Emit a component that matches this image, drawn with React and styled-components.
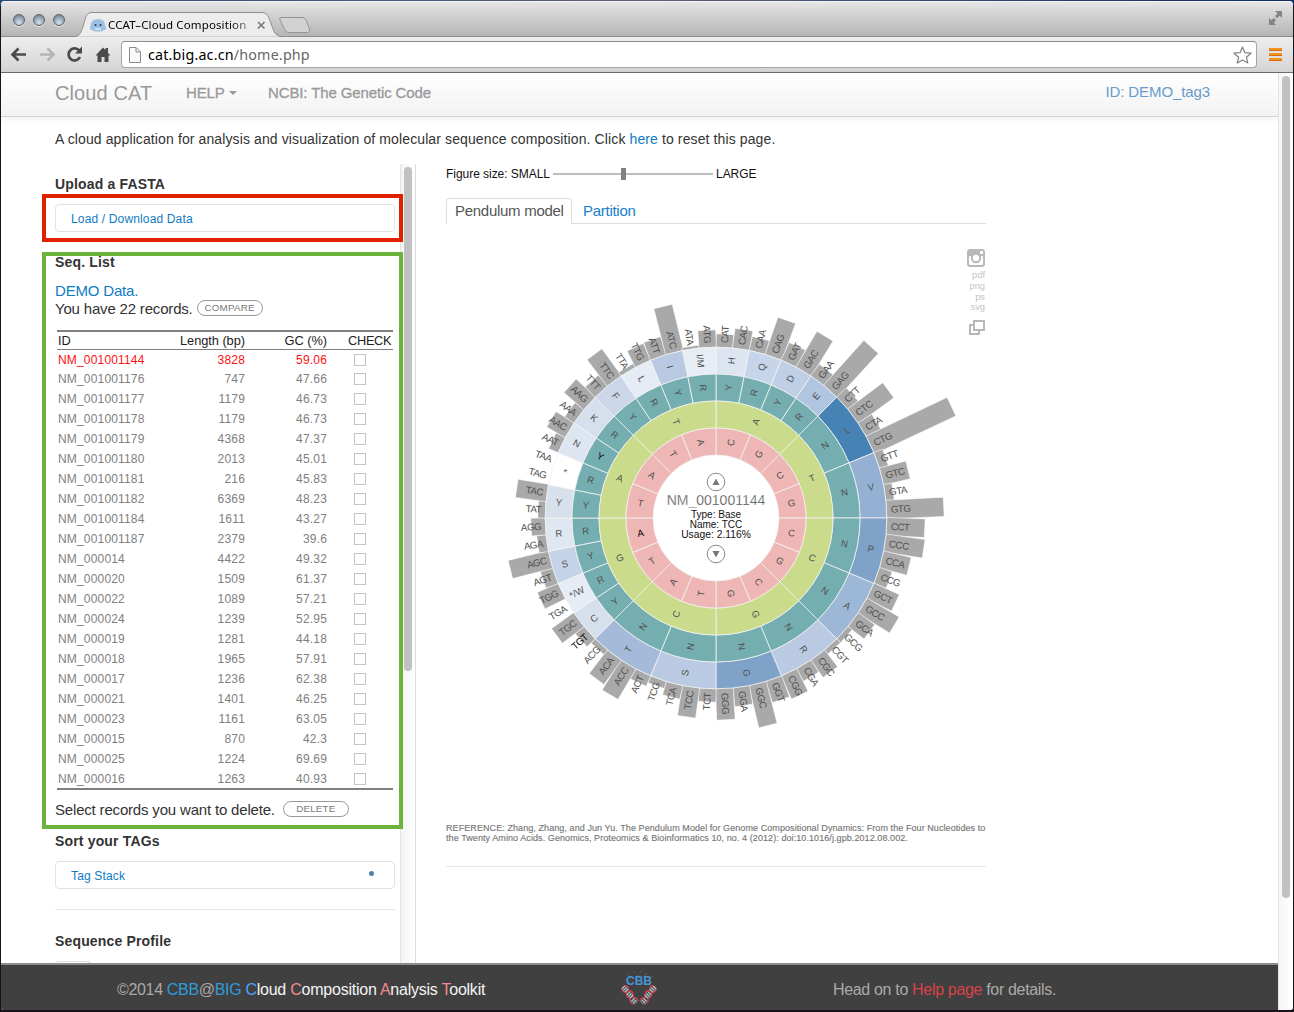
import React from "react";
import styled, { createGlobalStyle } from "styled-components";

const Global = createGlobalStyle`
  * { box-sizing: border-box; }
  html, body { margin: 0; padding: 0; height: 100%; overflow: hidden; }
  body { font-family: "Liberation Sans", Arial, sans-serif; color: #333; }
`;

const Desktop = styled.div`
  width: 1294px;
  height: 1012px;
  padding: 1px 1px 2px;
  background: linear-gradient(90deg, #2a4d78, #5d5f78 50%, #0d2d62) top / 100% 6px no-repeat, #171318;
`;
const Window = styled.div`
  display: flex;
  flex-direction: column;
  height: 1009px;
  overflow: hidden;
  border-radius: 4px 4px 3px 3px;
  background: #fff;
`;
const TitleBar = styled.div`
  display: flex;
  flex: none;
  height: 35px;
  background: linear-gradient(#e7e7e7, #cfcfcf 45%, #b5b5b5);
  box-shadow: inset 0 1px #f4f4f4;
  svg { display: block; }
`;
const Lights = styled.div`
  display: flex;
  gap: 8px;
  padding: 13px 0 0 12px;
  width: 73px;
`;
const Light = styled.span`
  width: 12px;
  height: 12px;
  border-radius: 50%;
  border: 1px solid #59636f;
  background: radial-gradient(circle at 50% 75%, #d3e1ec, #8fa0b1 60%, #66727f);
  box-shadow: 0 1px #eee;
`;
const TabShape = styled.div`
  position: relative;
  width: 208px;
  height: 36px;
  z-index: 1;
`;
const TabLabel = styled.div`
  position: absolute;
  left: 34px;
  top: 15px;
  width: 146px;
  white-space: nowrap;
  font: 11.5px/18px "Noto Sans", "Open Sans", sans-serif;
  letter-spacing: 0.13px;
  color: #000;
  mask-image: linear-gradient(90deg, #000 122px, rgba(0, 0, 0, 0.35) 142px);
`;
const NewTab = styled.div`
  padding: 15px 0 0 0;
  margin-left: -4px;
  flex: 1;
`;
const Expand = styled.div`
  padding: 9px 10px 0 0;
`;
const Toolbar = styled.div`
  display: flex;
  flex: none;
  align-items: center;
  height: 37px;
  padding: 0 11px 0 9px;
  border-top: 1px solid #8b8b8b;
  border-bottom: 1px solid #6d6d6d;
  background: linear-gradient(#ededed, #d5d5d5);
  svg { display: block; flex: none; }
`;
const Address = styled.div`
  display: flex;
  align-items: center;
  width: 1136px;
  height: 27px;
  margin: 0 12px 0 9px;
  padding: 0 4px 0 7px;
  border: 1px solid #a7a7a7;
  border-top-color: #8d8d8d;
  border-radius: 4px;
  background: #fff;
`;
const Url = styled.div`
  flex: 1;
  padding-left: 7px;
  font: 14.3px/24px "Noto Sans", "Open Sans", sans-serif;
  letter-spacing: 0.18px;
  color: #666;
  b { font-weight: 400; color: #000; }
`;
const Viewport = styled.div`
  display: flex;
  flex: 1;
  min-height: 0;
`;
const Page = styled.div`
  display: flex;
  flex-direction: column;
  width: 1277px;
`;
const PageScroll = styled.div`
  width: 15px;
  padding: 3px 3px;
  border-left: 1px solid #e4e4e4;
  background: linear-gradient(90deg, #f6f6f6, #fff);
`;
const Thumb = styled.div`
  width: 8px;
  height: ${(p) => p.$h}px;
  border-radius: 4px;
  background: #c1c1c1;
`;
const Nav = styled.nav`
  display: flex;
  flex: none;
  height: 44px;
  padding: 0 68px 4px 54px;
  align-items: center;
  border-bottom: 1px solid #d4d4d4;
  background: linear-gradient(#fff, #f2f2f2);
  box-shadow: 0 1px 8px rgba(0, 0, 0, 0.08);
  color: #999;
  font-size: 15px;
  white-space: nowrap;
`;
const Brand = styled.div`
  width: 131px;
  padding-top: 2px;
  font-size: 20px;
  letter-spacing: 0.1px;
`;
const NavItem = styled.div`
  display: flex;
  align-items: center;
  gap: 4px;
  width: ${(p) => p.$w || "auto"};
  -webkit-text-stroke: 0.3px #999;
  letter-spacing: ${(p) => p.$ls || "0"};
`;
const Caret = styled.i`
  border: 4.5px solid transparent;
  border-top-color: #999;
  border-bottom: 0;
`;
const UserId = styled.div`
  margin: -3px 0 0 auto;
  color: #689cc9;
  font-size: 15px;
  letter-spacing: -0.1px;
`;
const Intro = styled.p`
  flex: none;
  height: 47px;
  margin: 0;
  padding: 12px 54px;
  font-size: 14px;
  line-height: 20px;
  letter-spacing: 0.112px;
  white-space: nowrap;
`;
const Link = styled.a`
  color: ${(p) => p.$c || "#0e7cc4"};
`;
const Columns = styled.div`
  display: flex;
  flex: none;
  height: 799px;
`;
const Side = styled.aside`
  display: flex;
  flex: none;
  width: 415px;
  padding-left: 54px;
`;
const SideBody = styled.div`
  width: 345px;
  padding: 10px 5px 0 0;
`;
const SideScroll = styled.div`
  width: 16px;
  padding: 3px 3px 0 3px;
  border-left: 1px solid #e3e3e3;
  border-right: 1px solid #dcdcdc;
  background: linear-gradient(90deg, #f3f3f3, #fff);
`;
const Heading = styled.h4`
  margin: ${(p) => p.$mt || 0}px 0 10px;
  font-size: 14px;
  line-height: 20px;
  letter-spacing: ${(p) => p.$ls || "0.16px"};
`;
const Marked = styled.section`
  position: relative;
`;
const Marker = styled.div`
  position: absolute;
  left: -13px;
  top: ${(p) => p.$top}px;
  width: 361px;
  height: ${(p) => p.$h}px;
  border: 4px solid ${(p) => p.$c};
  z-index: 2;
`;
const Accordion = styled.div`
  display: flex;
  justify-content: space-between;
  align-items: center;
  height: 28px;
  padding: 2px 20px 0 15px;
  border: 1px solid #e2e2e2;
  border-radius: 4px;
  font-size: 12px;
  letter-spacing: 0.15px;
`;
const Dot = styled.i`
  width: 5px;
  height: 5px;
  margin-top: -5px;
  border-radius: 50%;
  background: #4682b4;
`;
const Line = styled.div`
  display: flex;
  align-items: center;
  height: ${(p) => p.$h || 18}px;
  margin-top: ${(p) => p.$mt || 0}px;
  padding-bottom: 2px;
  gap: ${(p) => p.$gap || 4}px;
  font-size: 15px;
  letter-spacing: -0.18px;
  white-space: nowrap;
`;
const Pill = styled.button`
  height: 16px;
  width: 66px;
  padding: 0;
  border: 1px solid #999;
  border-radius: 8px;
  background: #fff;
  color: #777;
  font: 9.8px/14px "Liberation Sans", sans-serif;
  letter-spacing: 0.2px;
`;
const Table = styled.div`
  margin: 12px 0 0 2px;
  width: 336px;
  border-top: 2px solid #808080;
  border-bottom: 2px solid #808080;
`;
const Row = styled.div`
  display: grid;
  grid-template-columns: 107px 80px 82px 67px;
  align-items: center;
  height: ${(p) => p.$h || 20}px;
  padding-left: 1px;
  font-size: 12px;
  letter-spacing: 0.17px;
  color: ${(p) => (p.$active ? "#ff1010" : "#808080")};
  > :nth-child(2), > :nth-child(3) { text-align: right; }
`;
const HeadRow = styled(Row)`
  height: 18px;
  border-bottom: 1px solid #808080;
  font-size: 12.8px;
  letter-spacing: -0.04px;
  color: #222;
  white-space: nowrap;
  > :last-child { padding-left: 21px; letter-spacing: -0.3px; }
`;
const Check = styled.span`
  width: 12px;
  height: 12px;
  margin-left: 27px;
  border: 1px solid #c4c4c4;
  background: #fff;
`;
const Hr = styled.div`
  height: 1px;
  margin-top: ${(p) => p.$mt}px;
  background: #e6e6e6;
`;
const Stub = styled.div`
  width: 36px;
  height: 3px;
  border: 1px solid #ddd;
  border-bottom: 0;
  border-radius: 4px 4px 0 0;
`;
const Main = styled.main`
  width: 570px;
  padding-left: 30px;
`;
const SizeRow = styled.div`
  display: flex;
  align-items: center;
  height: 20px;
  gap: 3px;
  font-size: 12px;
  letter-spacing: -0.04px;
  color: #111;
  white-space: nowrap;
`;
const Track = styled.div`
  display: flex;
  align-items: center;
  justify-content: center;
  width: 160px;
  height: 2px;
  padding-right: 20px;
  background: #bdbdbd;
`;
const Knob = styled.i`
  width: 5px;
  height: 12px;
  background: #808080;
`;
const Tabs = styled.div`
  display: flex;
  height: 26px;
  margin-top: 14px;
  border-bottom: 1px solid #ddd;
  font-size: 15px;
  line-height: 24px;
  letter-spacing: -0.28px;
  white-space: nowrap;
`;
const Tab = styled.div`
  height: 26px;
  width: ${(p) => (p.$on ? "126px" : "80px")};
  padding-left: ${(p) => (p.$on ? 8 : 10)}px;
  border: ${(p) => (p.$on ? "1px solid #ddd" : "1px solid transparent")};
  border-bottom-color: ${(p) => (p.$on ? "#fff" : "#ddd")};
  border-radius: 4px 4px 0 0;
  color: ${(p) => (p.$on ? "#555" : "#1480cc")};
`;
const ChartArea = styled.div`
  position: relative;
  height: 599px;
  svg { display: block; }
`;
const Export = styled.div`
  position: absolute;
  right: 1px;
  top: 25px;
  display: flex;
  flex-direction: column;
  align-items: flex-end;
  font-size: 9.3px;
  line-height: 10.8px;
  color: #c4c4c4;
  svg:first-child { margin-bottom: 3px; }
  svg:last-child { margin-top: 6px; }
`;
const Reference = styled.p`
  margin: 0;
  font-size: 9px;
  line-height: 10px;
  letter-spacing: 0.08px;
  color: #777;
  white-space: nowrap;
  -webkit-text-stroke: 0.15px #777;
`;
const Footer = styled.footer`
  position: relative;
  display: flex;
  flex: none;
  align-items: center;
  height: 47px;
  border-top: 2px solid #8c8c8c;
  padding-left: 116px;
  padding-top: 4px;
  background: #404040;
  color: #aaa;
  font-size: 16px;
  white-space: nowrap;
  svg { display: block; margin-top: -2px; }
`;
const Copy = styled.div`
  width: 503px;
  letter-spacing: -0.33px;
`;
const Product = styled.span`
  color: #f4f4f4;
  letter-spacing: -0.24px;
`;
const Tint = styled.span`
  color: ${(p) => p.$c};
`;
const HelpText = styled.div`
  margin-left: 175px;
  letter-spacing: -0.33px;
`;

const records = [
  ["NM_001001144", "3828", "59.06"], ["NM_001001176", "747", "47.66"], ["NM_001001177", "1179", "46.73"],
  ["NM_001001178", "1179", "46.73"], ["NM_001001179", "4368", "47.37"], ["NM_001001180", "2013", "45.01"],
  ["NM_001001181", "216", "45.83"], ["NM_001001182", "6369", "48.23"], ["NM_001001184", "1611", "43.27"],
  ["NM_001001187", "2379", "39.6"], ["NM_000014", "4422", "49.32"], ["NM_000020", "1509", "61.37"],
  ["NM_000022", "1089", "57.21"], ["NM_000024", "1239", "52.95"], ["NM_000019", "1281", "44.18"],
  ["NM_000018", "1965", "57.91"], ["NM_000017", "1236", "62.38"], ["NM_000021", "1401", "46.25"],
  ["NM_000023", "1161", "63.05"], ["NM_000015", "870", "42.3"], ["NM_000025", "1224", "69.69"],
  ["NM_000016", "1263", "40.93"],
];

const CX = 270;
const CY = 294;
const polar = (r, deg) => {
  const a = (deg * Math.PI) / 180;
  return [CX + r * Math.sin(a), CY - r * Math.cos(a)];
};
const wedge = (r0, r1, a0, a1) => {
  const [x0, y0] = polar(r0, a0);
  const [x1, y1] = polar(r1, a0);
  const [x2, y2] = polar(r1, a1);
  const [x3, y3] = polar(r0, a1);
  return `M${x0} ${y0}L${x1} ${y1}A${r1} ${r1} 0 0 1 ${x2} ${y2}L${x3} ${y3}A${r0} ${r0} 0 0 0 ${x0} ${y0}Z`;
};

const STEP = 5.625;
const S = (list, span) => list.map((label) => ({ label, span }));
const inner = S("CGCGCGCGTATATATA".split(""), 4);
const second = S("ATCGCGAT".split(""), 8);
const third = [...S("YRYR".split(""), 2), ...S("NNNNNNNN".split(""), 4), ...S("YRYRYRYRYRYR".split(""), 2)];
const amino = [
  ["H", 2, "#dde5f0"], ["Q", 2, "#c6d5e9"], ["D", 2, "#bfcfe5"], ["E", 2, "#b0c5df"],
  ["L", 4, "#4682b4"], ["V", 4, "#94b0d3"], ["P", 4, "#7fa2c9"], ["A", 4, "#9db8d7"],
  ["R", 4, "#b9cae2"], ["G", 4, "#7fa2c9"], ["S", 4, "#b9cae2"], ["T", 4, "#a5bad9"],
  ["C", 2, "#d6e0ed"], ["*/W", 2, "#e6ecf5"], ["S", 2, "#c4d3e8"], ["R", 2, "#dfe7f1"],
  ["Y", 2, "#d6e1ec"], ["*", 2, "#ffffff"], ["N", 2, "#dde5f1"], ["K", 2, "#d6e0ed"],
  ["F", 2, "#cbd7e9"], ["L", 2, "#e6ecf5"], ["I", 2, "#b9c9e2"], ["I/M", 2, "#e6edf5"],
].map(([label, span, fill]) => ({ label, span, fill }));
const codons = [
  ["CAT", 184], ["CAC", 190.5], ["CAA", 185], ["CAG", 210], ["GAT", 190], ["GAC", 212], ["GAA", 185], ["GAG", 231],
  ["CTT", 184], ["CTC", 214.5], ["CTA", 187], ["CTG", 260.5], ["GTT", 180], ["GTC", 198], ["GTA", 179], ["GTG", 228],
  ["CCT", 209], ["CCC", 210], ["CCA", 199], ["CCG", 184], ["GCT", 198.5], ["GCC", 208], ["GCA", 191], ["GCG", 176],
  ["CGT", 176], ["CGC", 192], ["CGA", 185], ["CGG", 196], ["GGT", 193], ["GGC", 214], ["GGA", 189.5], ["GGG", 202],
  ["TCT", 184], ["TCC", 201], ["TCA", 184.5], ["TCG", 178], ["ACT", 182], ["ACC", 206], ["ACA", 200.5], ["ACG", 176.5],
  ["TGT", 182], ["TGC", 198], ["TGA", 171], ["TGG", 193.5], ["AGT", 183.5], ["AGC", 212], ["AGA", 180], ["AGG", 185],
  ["TAT", 178], ["TAC", 201.5], ["TAG", 171], ["TAA", 171], ["AAT", 181], ["AAC", 192], ["AAA", 182], ["AAG", 197],
  ["TTT", 185], ["TTC", 204], ["TTA", 175], ["TTG", 189], ["ATT", 189.5], ["ATC", 218], ["ATA", 173.5], ["ATG", 188],
];

const barPath = (r0, r1, a0, a1) => {
  const mid = (a0 + a1) / 2;
  const a = (mid * Math.PI) / 180;
  const h = r0 * Math.sin(((a1 - a0) * Math.PI) / 360) + (r1 - r0) * 0.018;
  const at = (r, side) => {
    const [x, y] = polar(r, mid);
    return `${x + side * Math.cos(a)} ${y + side * Math.sin(a)}`;
  };
  return `M${at(r0, -h)}L${at(r1, -h * 1.03)}L${at(r1, h * 1.03)}L${at(r0, h)}Z`;
};

const ChartText = styled.text`
  font: ${(p) => (p.$tight ? 9.8 : 9.5)}px "Liberation Sans", sans-serif;
  letter-spacing: ${(p) => (p.$tight ? "-0.5px" : "0")};
  fill: ${(p) => (p.$dark ? "#000" : "#505050")};
`;

function Radial({ r, deg, anchor = "middle", tight, dark, children }) {
  const left = deg > 180;
  const [x, y] = polar(r, deg);
  const textAnchor = anchor === "middle" ? "middle" : left ? "end" : "start";
  return (
    <ChartText $tight={tight} $dark={dark} textAnchor={textAnchor} dy="3.3"
      transform={`translate(${x} ${y}) rotate(${left ? deg + 90 : deg - 90})`}>
      {children}
    </ChartText>
  );
}

function Ring({ items, r0, r1, fill, darkIndex }) {
  let pos = 0;
  return (
    <g>
      {items.map((it, i) => {
        const a0 = pos * STEP;
        pos += it.span;
        const a1 = pos * STEP;
        return (
          <g key={i}>
            <path d={wedge(r0, r1, a0, a1)} fill={it.fill || fill} stroke="#f3f3f3" strokeWidth="0.8" />
            <Radial r={(r0 + r1) / 2 + 0.5} deg={(a0 + a1) / 2} dark={i === darkIndex}>{it.label}</Radial>
          </g>
        );
      })}
    </g>
  );
}

const CenterText = styled.text`
  font: ${(p) => p.$size}px "Liberation Sans", sans-serif;
  fill: ${(p) => p.$c || "#111"};
`;

function Pendulum() {
  return (
    <svg width="540" height="594" viewBox="0 0 540 594">
      {codons.map(([c, r], i) => (
        <path key={c} d={barPath(170.5, Math.max(r, 171), i * STEP, (i + 1) * STEP)} fill={r > 171 ? "#a9a9a9" : "#eee"} stroke="#fff" strokeWidth="0.6" />
      ))}
      <Ring items={amino} r0={144} r1={170.8} />
      <Ring items={third} r0={117} r1={144} fill="#75aeb0" darkIndex={18} />
      <Ring items={second} r0={90} r1={117} fill="#cadc8b" />
      <Ring items={inner} r0={63} r1={90} fill="#efb6b6" darkIndex={11} />
      {codons.map(([c], i) => (
        <Radial key={c} r={175} deg={(i + 0.5) * STEP} anchor="edge" tight dark={c === "TGT"}>{c}</Radial>
      ))}
      <g fill="#fff" stroke="#888">
        <circle cx="270" cy="258" r="8.8" />
        <circle cx="270" cy="330" r="8.8" />
      </g>
      <path d="M266.5 261L270 254.5L273.5 261ZM266.5 327L270 333.5L273.5 327Z" fill="#777" />
      <g textAnchor="middle">
        <CenterText x={CX} y="281" $size={14} $c="#333" stroke="#fff" strokeWidth="0.35">NM_001001144</CenterText>
        <CenterText x={CX} y="294" $size={10}>Type: Base</CenterText>
        <CenterText x={CX} y="304" $size={10}>Name: TCC</CenterText>
        <CenterText x={CX} y="314" $size={10.3}>Usage: 2.116%</CenterText>
      </g>
    </svg>
  );
}

const Helix = ({ flip }) => (
  <g transform={flip ? "translate(38 0) scale(-1 1)" : undefined}>
    <path d="M2 21Q3 16 7 17Q9 20 8 22Q12 21 13 25Q12 28 13 29Q17 28 18 32M2 21Q4 24 7 23Q5 28 10 29Q9 34 14 35" fill="none" stroke="#c9424c" strokeWidth="1.5" />
    <g fill="none" stroke="#a8ccd2" strokeWidth="4.5" strokeDasharray="1.3 0.9">
      <path d="M3 18L7 22M8 24L12 28M12.500 30.500L16 34" />
    </g>
  </g>
);

export default function App() {
  return (
    <Desktop>
      <Global />
      <Window>
        <TitleBar>
          <Lights><Light /><Light /><Light /></Lights>
          <TabShape>
            <svg width="208" height="36">
              <path d="M1 35.5C6 35 7 31 9 25.500L11.500 17Q13 11.500 18 11.500H188Q193 11.500 195 17L199 28Q201 34.500 207 35.500" fill="#ececec" stroke="#8f8f8f" />
              <path d="M3 36.500H205" stroke="#ececec" strokeWidth="2" />
              <g fill="#9cc1e2"><ellipse cx="24" cy="23.500" rx="7" ry="5.500" /><circle cx="19" cy="26.500" r="3" /><circle cx="29" cy="26.500" r="3" /><rect x="19" y="25" width="10" height="5.500" rx="2" /></g>
              <circle cx="21.500" cy="24" r="1" fill="#235" /><circle cx="26.500" cy="24" r="1" fill="#235" />
              <path d="M21 28h6" stroke="#fff" />
              <path d="M184 21l6.500 6.500M190.500 21l-6.500 6.500" stroke="#777" strokeWidth="1.600" />
            </svg>
            <TabLabel>CCAT–Cloud Composition</TabLabel>
          </TabShape>
          <NewTab>
            <svg width="34" height="18"><path d="M3 1.500H24Q27 1.500 28 4L31.500 13Q32 16.500 30 16.500H11Q8 16.500 7 14L2 4Q1 1.500 3 1.500Z" fill="#d2d2d2" stroke="#969696" /></svg>
          </NewTab>
          <Expand>
            <svg width="15" height="16" fill="#848484"><path d="M7 1h7v7l-2.300-2.300-2.600 2.500-2.100-2 2.500-2.700zM1 8v7h7L5.700 12.600 8 10.300 5.700 8 3.300 10.300z" /></svg>
          </Expand>
        </TitleBar>
        <Toolbar>
          <svg width="102" height="24" fill="none" stroke="#4b4b4b" strokeWidth="2.700">
            <path d="M16 11.500H3M8.500 5.500L2.500 11.500L8.500 17.500" />
            <path d="M30 11.500H43M37.500 5.500L43.500 11.500L37.500 17.500" stroke="#b5b5b5" />
            <path d="M69.500 8A6 6 0 1 0 70 14" />
            <path d="M72 3.500V10.500H65Z" fill="#4b4b4b" stroke="none" />
            <path d="M85.500 12.500L93 4.500L95.500 7V5H98V10L100.500 12.500H98.500V19H94.500V14H91.500V19H87.500V12.500Z" fill="#4b4b4b" stroke="none" />
          </svg>
          <Address>
            <svg width="12" height="16"><path d="M.5.500H7L11.500 5V15.500H.5ZM7 .5V5H11.500" fill="#fafafa" stroke="#888" /></svg>
            <Url><b>cat.big.ac.cn</b>/home.php</Url>
            <svg width="19" height="18"><path d="M9.500 1L11.900 6.700 18 7.200 13.400 11.200 14.800 17 9.500 13.900 4.200 17 5.600 11.200 1 7.200 7.100 6.700Z" fill="#fff" stroke="#828282" strokeWidth="1.200" strokeLinejoin="round" /></svg>
          </Address>
          <svg width="13" height="14"><path d="M0 1.500H13M0 6.500H13M0 11.500H13" stroke="#f29320" strokeWidth="3" /><path d="M0 2.500H13M0 7.500H13M0 12.500H13" stroke="#d76a13" /></svg>
        </Toolbar>
        <Viewport>
          <Page>
            <Nav>
              <Brand>Cloud CAT</Brand>
              <NavItem $w="82px" $ls="-0.12px">HELP <Caret /></NavItem>
              <NavItem $ls="-0.12px">NCBI: The Genetic Code</NavItem>
              <UserId>ID: DEMO_tag3</UserId>
            </Nav>
            <Intro>
              A cloud application for analysis and visualization of molecular sequence composition. Click <Link>here</Link> to reset this page.
            </Intro>
            <Columns>
              <Side>
                <SideBody>
                  <Heading>Upload a FASTA</Heading>
                  <Marked>
                    <Marker $top={-10} $h={48} $c="#e12000" />
                    <Accordion><Link>Load / Download Data</Link></Accordion>
                  </Marked>
                  <Marked>
                    <Marker $top={0} $h={577} $c="#6cb33e" />
                    <Heading $mt={20}>Seq. List</Heading>
                    <Line><Link>DEMO Data.</Link></Line>
                    <Line>You have 22 records. <Pill>COMPARE</Pill></Line>
                    <Table>
                      <HeadRow><span>ID</span><span>Length (bp)</span><span>GC (%)</span><span>CHECK</span></HeadRow>
                      {records.map(([id, len, gc], i) => (
                        <Row key={id} $active={i === 0} $h={i === 0 ? 19 : i === 21 ? 19 : 20}>
                          <span>{id}</span><span>{len}</span><span>{gc}</span><Check />
                        </Row>
                      ))}
                    </Table>
                    <Line $h={20} $mt={10} $gap={8}>Select records you want to delete. <Pill>DELETE</Pill></Line>
                  </Marked>
                  <Heading $mt={11}>Sort your TAGs</Heading>
                  <Accordion><Link>Tag Stack</Link><Dot /></Accordion>
                  <Hr $mt={20} />
                  <Heading $mt={21}>Sequence Profile</Heading>
                  <Stub />
                </SideBody>
                <SideScroll><Thumb $h={504} /></SideScroll>
              </Side>
              <Main>
                <SizeRow>Figure size: SMALL <Track><Knob /></Track> LARGE</SizeRow>
                <Tabs><Tab $on>Pendulum model</Tab><Tab>Partition</Tab></Tabs>
                <ChartArea>
                  <Pendulum />
                  <Export>
                    <svg width="18" height="18">
                      <rect width="18" height="18" rx="3" fill="#b8b8b8" />
                      <path d="M2 7H16V14.500Q16 16 14.500 16H3.500Q2 16 2 14.500Z" fill="#fff" />
                      <rect x="13" y="2" width="3" height="3" fill="#fff" />
                      <circle cx="9" cy="9" r="4.200" fill="#fff" stroke="#b8b8b8" strokeWidth="2" />
                    </svg>
                    <span>pdf</span><span>png</span><span>ps</span><span>svg</span>
                    <svg width="17" height="17" fill="#fff" stroke="#b8b8b8" strokeWidth="2"><rect x="2" y="6" width="9" height="9" /><rect x="6" y="2" width="10" height="9" /></svg>
                  </Export>
                </ChartArea>
                <Reference>
                  REFERENCE: Zhang, Zhang, and Jun Yu. The Pendulum Model for Genome Compositional Dynamics: From the Four Nucleotides to<br />
                  the Twenty Amino Acids. Genomics, Proteomics &amp; Bioinformatics 10, no. 4 (2012): doi:10.1016/j.gpb.2012.08.002.
                </Reference>
                <Hr $mt={23} />
              </Main>
            </Columns>
            <Footer>
              <Copy>
                ©2014 <Tint $c="#2f9bdc">CBB</Tint>@<Tint $c="#2f9bdc">BIG</Tint>{" "}
                <Product>
                  <Tint $c="#4da0ff">C</Tint>loud <Tint $c="#f28a8f">C</Tint>omposition <Tint $c="#f28a8f">A</Tint>nalysis <Tint $c="#f28a8f">T</Tint>oolkit
                </Product>
              </Copy>
              <svg width="38" height="40">
                <path d="M8 5l2 1M14 2l1 2M20 3l2-1M27 4l-1 2M31 8l2-1M5 11l2 0M17 6l2 1M24 7l2-1" stroke="#526052" />
                <text x="19" y="16" textAnchor="middle" fontSize="12" fontWeight="bold" fill="#4794d8" fontFamily="Liberation Sans, sans-serif">CBB</text>
                <Helix /><Helix flip />
              </svg>
              <HelpText>Head on to <Link $c="#d84348">Help page</Link> for details.</HelpText>
            </Footer>
          </Page>
          <PageScroll><Thumb $h={822} /></PageScroll>
        </Viewport>
      </Window>
    </Desktop>
  );
}
